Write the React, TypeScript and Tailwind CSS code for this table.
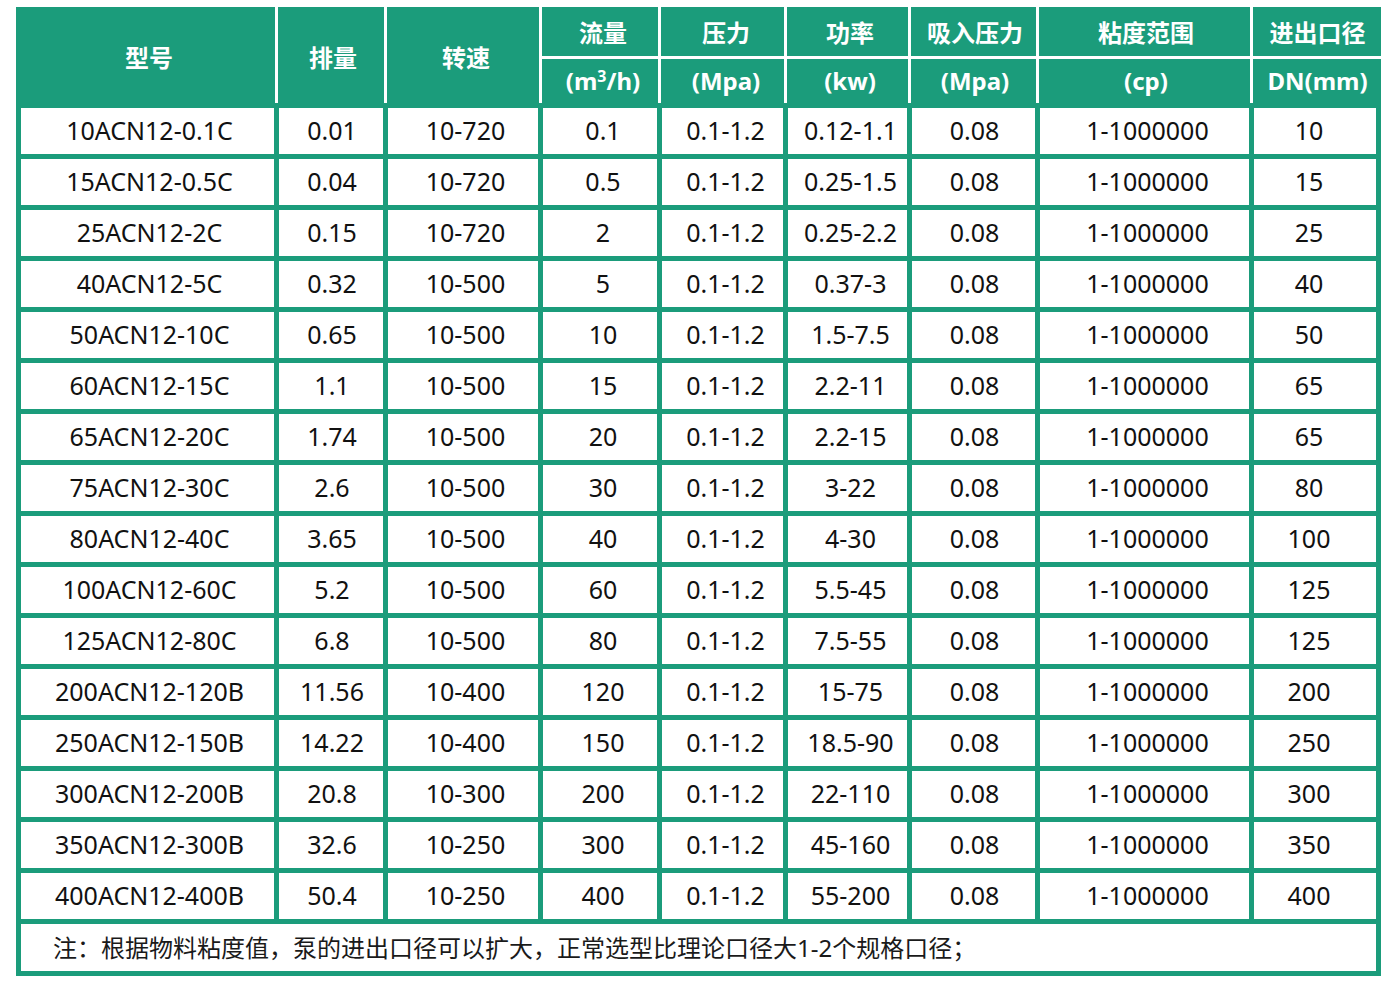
import React from 'react';

// 泵型号参数表
const rows: string[][] = [
  ['10ACN12-0.1C', '0.01', '10-720', '0.1', '0.1-1.2', '0.12-1.1', '0.08', '1-1000000', '10'],
  ['15ACN12-0.5C', '0.04', '10-720', '0.5', '0.1-1.2', '0.25-1.5', '0.08', '1-1000000', '15'],
  ['25ACN12-2C', '0.15', '10-720', '2', '0.1-1.2', '0.25-2.2', '0.08', '1-1000000', '25'],
  ['40ACN12-5C', '0.32', '10-500', '5', '0.1-1.2', '0.37-3', '0.08', '1-1000000', '40'],
  ['50ACN12-10C', '0.65', '10-500', '10', '0.1-1.2', '1.5-7.5', '0.08', '1-1000000', '50'],
  ['60ACN12-15C', '1.1', '10-500', '15', '0.1-1.2', '2.2-11', '0.08', '1-1000000', '65'],
  ['65ACN12-20C', '1.74', '10-500', '20', '0.1-1.2', '2.2-15', '0.08', '1-1000000', '65'],
  ['75ACN12-30C', '2.6', '10-500', '30', '0.1-1.2', '3-22', '0.08', '1-1000000', '80'],
  ['80ACN12-40C', '3.65', '10-500', '40', '0.1-1.2', '4-30', '0.08', '1-1000000', '100'],
  ['100ACN12-60C', '5.2', '10-500', '60', '0.1-1.2', '5.5-45', '0.08', '1-1000000', '125'],
  ['125ACN12-80C', '6.8', '10-500', '80', '0.1-1.2', '7.5-55', '0.08', '1-1000000', '125'],
  ['200ACN12-120B', '11.56', '10-400', '120', '0.1-1.2', '15-75', '0.08', '1-1000000', '200'],
  ['250ACN12-150B', '14.22', '10-400', '150', '0.1-1.2', '18.5-90', '0.08', '1-1000000', '250'],
  ['300ACN12-200B', '20.8', '10-300', '200', '0.1-1.2', '22-110', '0.08', '1-1000000', '300'],
  ['350ACN12-300B', '32.6', '10-250', '300', '0.1-1.2', '45-160', '0.08', '1-1000000', '350'],
  ['400ACN12-400B', '50.4', '10-250', '400', '0.1-1.2', '55-200', '0.08', '1-1000000', '400'],
];

// small nudges so the text sits where it does in the source table
const cellPad = ['pl-[4px]', 'pl-[2px]', 'pl-[5px]', 'pl-[6px]', 'pl-[6px]', 'pl-[6px]', 'pl-[2px]', 'pl-[6px]', 'pr-[12px]'];

const units: { top: string; bottom: React.ReactNode; w: string; pad: string }[] = [
  {
    top: '流量',
    bottom: (
      <>
        (m<span className="relative -top-[5px] text-[16px]">3</span>/h)
      </>
    ),
    w: 'w-[116px]',
    pad: 'pl-[6px]',
  },
  { top: '压力', bottom: '(Mpa)', w: 'w-[123px]', pad: 'pl-[7px]' },
  { top: '功率', bottom: '(kw)', w: 'w-[121px]', pad: 'pl-[5px]' },
  { top: '吸入压力', bottom: '(Mpa)', w: 'w-[125px]', pad: 'pl-[3px]' },
  { top: '粘度范围', bottom: '(cp)', w: 'w-[211px]', pad: 'pl-[3px]' },
  { top: '进出口径', bottom: 'DN(mm)', w: 'w-[128px]', pad: 'pl-[1px]' },
];

export default function App() {
  return (
    <div
      className="w-[1395px] h-[990px] bg-white pt-[7px] pl-[16px]"
      style={{ fontFamily: '"Noto Sans", "Noto Sans CJK SC", sans-serif' }}
    >
      <div className="w-[1365px]">
        {/* Header */}
        <div className="flex h-[96px] bg-white gap-x-[3px] text-white font-bold text-[24px]">
          <div className="w-[259px] bg-[#1b9c7b] flex items-center justify-center pl-[7px] pt-[6px]">型号</div>
          <div className="w-[106px] bg-[#1b9c7b] flex items-center justify-center pl-[4px] pt-[6px]">排量</div>
          <div className="w-[152px] bg-[#1b9c7b] flex items-center justify-center pl-[6px] pt-[6px]">转速</div>
          {units.map((u, i) => (
            <div key={i} className={'flex flex-col gap-y-[3px] ' + u.w}>
              <div className={'h-[49px] bg-[#1b9c7b] flex items-center justify-center pt-[3px] ' + u.pad}>
                {u.top}
              </div>
              <div className={'flex-1 bg-[#1b9c7b] flex items-center justify-center ' + u.pad}>{u.bottom}</div>
            </div>
          ))}
        </div>

        {/* Body */}
        <div className="bg-[#1b9c7b] p-[5px] flex flex-col gap-y-[5px] text-[25px] text-[#111]">
          {rows.map((r, i) => (
            <div
              key={i}
              className="grid grid-cols-[253px_104px_150px_114px_121px_119px_123px_209px_122px] gap-x-[5px] h-[46px]"
            >
              {r.map((c, j) => (
                <div key={j} className={'bg-white flex items-center justify-center ' + cellPad[j]}>
                  {c}
                </div>
              ))}
            </div>
          ))}
          <div className="bg-white h-[47px] flex items-center pl-[32px] text-[24px] text-[#1a1a1a]">
            注：根据物料粘度值，泵的进出口径可以扩大，正常选型比理论口径大1-2个规格口径；
          </div>
        </div>
      </div>
    </div>
  );
}
